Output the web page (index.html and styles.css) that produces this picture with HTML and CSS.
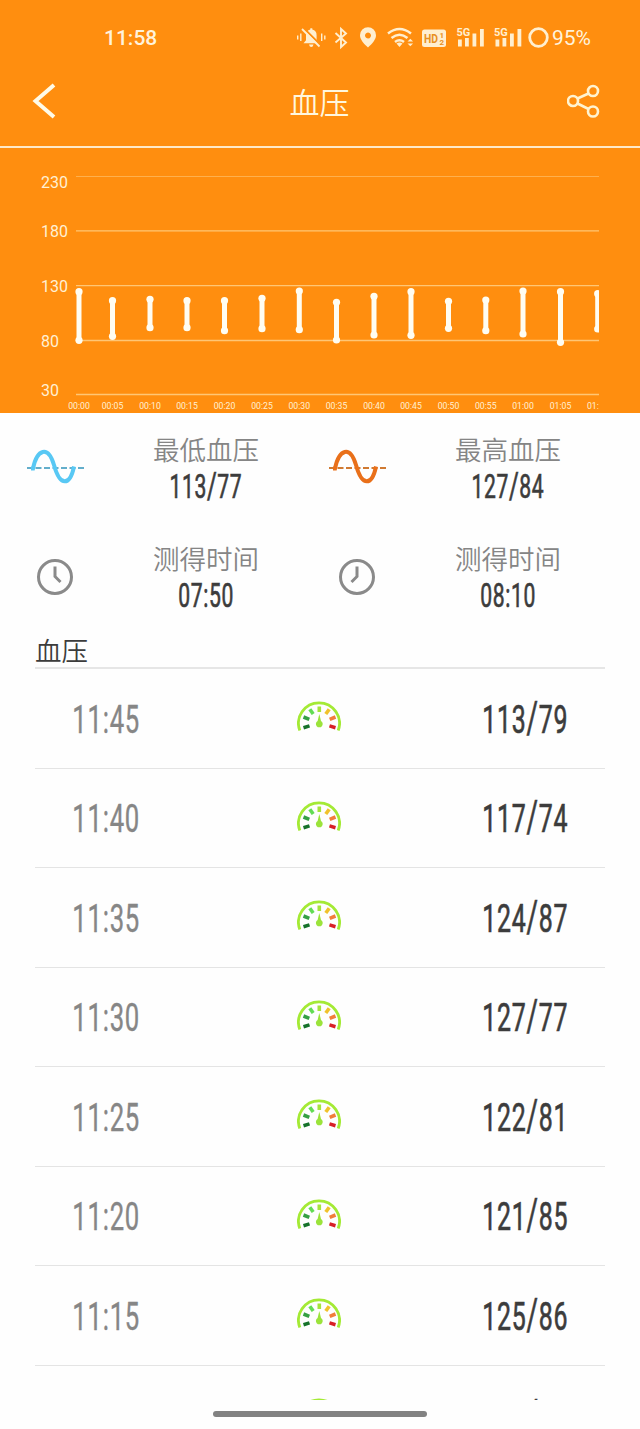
FILE: index.html
```html
<!DOCTYPE html>
<html lang="zh-CN">
<head>
  <meta charset="UTF-8">
  <meta name="viewport" content="width=device-width, initial-scale=1.0">
  <title>血压</title>
  <link rel="stylesheet" href="styles.css">
</head>
<body>
  <!-- Shared gauge icon -->
  <svg class="defs" width="0" height="0">
    <symbol id="gauge" viewBox="0 0 44 34">
      <path d="M2.8 31.500 A20.500 20.500 0 1 1 41.200 31.500" fill="none" stroke="#a4ea35" stroke-width="2.8"/>
      <g fill="none" stroke-width="3.6">
        <path d="M6.500 28.700 L12.500 26.900" stroke="#16722a"/>
        <path d="M6.500 18 L12.300 20.400" stroke="#35a043"/>
        <path d="M12.800 10.200 L16.200 15" stroke="#62dc55"/>
        <path d="M22.300 7.500 V13" stroke="#a5e43b"/>
        <path d="M32.200 10.200 L28.800 15" stroke="#f0c22c"/>
        <path d="M38.500 18 L32.700 20.400" stroke="#f17d3a"/>
        <path d="M38.500 28.700 L32.500 26.900" stroke="#d81f26"/>
      </g>
      <path d="M22.300 15 L24 22 A3.400 3.400 0 1 1 20.600 22 Z" fill="#9be33b"/>
    </symbol>
  </svg>

  <div class="screen">
    <header class="header">
      <div class="status-bar">
        <span class="clock">11:58</span>
        <svg class="status-icons" width="256" height="26" viewBox="296 25 256 26">
          <!-- muted bell -->
          <path d="M303.500 43.300l2.500-3v-5q0-4.700 4.300-5.700v-1.400h2v1.400q4.300 1 4.300 5.700v5l2.500 3zM309 44.500h4.500q-.5 2.500-2.200 2.500t-2.300-2.500z" fill="#ffefd0"/>
          <path d="M303.500 28L321 45.500" stroke="#ff8e0f" stroke-width="2"/>
          <path d="M302 29L319.500 46.500" stroke="#ffefd0" stroke-width="1.800"/>
          <path d="M297.700 35.500v4M300.800 33.500v7.500M321.700 33.500v7.500M324.800 35.500v4" stroke="#ffefd0" stroke-width="1.400"/>
          <path d="M335.500 33l10.500 9.500-5 4.500V29l5 4.500-10.500 9" fill="none" stroke="#ffefd0" stroke-width="1.900"/>
          <path d="M368 27.200a8 8 0 0 1 8 8c0 4.500-4 8.500-8 12.300c-4-3.800-8-7.800-8-12.300a8 8 0 0 1 8-8zm0 5.300a3 3 0 1 0 .01 0z" fill="#ffefd0"/>
          <!-- wifi -->
          <g fill="none" stroke="#ffefd0" stroke-width="2.500">
            <path d="M388 33.500q11.500-9 23 0M391.500 38q8-6.500 16 0M395 42q4.500-3.500 9 0"/>
          </g>
          <path d="M396.500 43.500q3-2 6 0l-3 3.500zM407.500 41.500l2.800-2.800 2.800 2.800zM407.500 43.500l2.800 2.800 2.800-2.800z" fill="#ffefd0"/>
          <rect x="422" y="29.500" width="24" height="17.500" rx="2.500" fill="#ffefd0"/>
          <text class="hd" x="424" y="43" textLength="14" lengthAdjust="spacingAndGlyphs">HD</text>
          <text class="hd-sub" x="439.500" y="37.500">1</text>
          <text class="hd-sub" x="439.500" y="45">2</text>
          <!-- signal, both SIMs -->
          <g id="signal" fill="#ffefd0">
            <text class="net" x="456.500" y="36.300">5G</text>
            <rect x="458" y="39.500" width="3.800" height="7"/>
            <rect x="465" y="38" width="3.800" height="8.500"/>
            <rect x="472.500" y="33.500" width="3.800" height="13"/>
            <rect x="480" y="29" width="3.800" height="17.500"/>
          </g>
          <use href="#signal" x="37.500"/>
          <circle cx="538.500" cy="37.500" r="8.800" fill="none" stroke="#ffefd0" stroke-width="2.800"/>
        </svg>
        <span class="battery">95%</span>
      </div>
      <nav class="nav">
        <svg width="24" height="38" viewBox="0 0 24 38">
          <path d="M22 3L3.500 19l18.500 16" fill="none" stroke="#fffbe8" stroke-width="4"/>
        </svg>
        <h1 class="title">血压</h1>
        <svg width="34" height="34" viewBox="0 0 34 34" fill="none" stroke="#fff3d0" stroke-width="2.600">
          <circle cx="6" cy="17" r="5"/>
          <circle cx="26" cy="7" r="5"/>
          <circle cx="26" cy="27.500" r="5"/>
          <path d="M10.500 14.500L21.500 9.500M10.500 19.500L21.500 25"/>
        </svg>
      </nav>
    </header>

    <svg class="chart" id="chart" width="640" height="265" viewBox="0 148 640 265">
      <clipPath id="plot"><rect x="60" y="148" width="539" height="265"/></clipPath>
    </svg>

    <section class="stats">
      <div class="stat">
        <svg class="stat-icon" width="60" height="40" viewBox="0 0 60 40" fill="none">
          <path d="M1 20H58" stroke="#63aecb" stroke-width="1.900" stroke-dasharray="6 2.500"/>
          <path d="M5 20.500H7C11 1 22-3 28 17C34 39 44 38 48 18.500" stroke="#58c8f4" stroke-width="4"/>
        </svg>
        <div class="stat-text">
          <div class="stat-label">最低血压</div>
          <div class="stat-value"><span class="din">113<i>/</i>77</span></div>
        </div>
      </div>
      <div class="stat">
        <svg class="stat-icon" width="60" height="40" viewBox="0 0 60 40" fill="none">
          <path d="M1 20H58" stroke="#d07a32" stroke-width="1.900" stroke-dasharray="6 2.500"/>
          <path d="M5 20.500H7C11 1 22-3 28 17C34 39 44 38 48 18.500" stroke="#e9701a" stroke-width="4"/>
        </svg>
        <div class="stat-text">
          <div class="stat-label">最高血压</div>
          <div class="stat-value"><span class="din">127<i>/</i>84</span></div>
        </div>
      </div>
      <div class="stat">
        <svg class="stat-icon" width="60" height="40" viewBox="0 0 60 40" fill="none" stroke="#8a8a8a">
          <circle cx="29" cy="20" r="16.500" stroke-width="3"/>
          <path d="M29 9.500V19.500L34.500 25" stroke-width="3"/>
        </svg>
        <div class="stat-text">
          <div class="stat-label">测得时间</div>
          <div class="stat-value"><span class="din">07:50</span></div>
        </div>
      </div>
      <div class="stat">
        <svg class="stat-icon" width="60" height="40" viewBox="0 0 60 40" fill="none" stroke="#8a8a8a">
          <circle cx="29" cy="20" r="16.500" stroke-width="3"/>
          <path d="M29 9.500V19.500L23.500 25" stroke-width="3"/>
        </svg>
        <div class="stat-text">
          <div class="stat-label">测得时间</div>
          <div class="stat-value"><span class="din">08:10</span></div>
        </div>
      </div>
    </section>

    <h2 class="section-title">血压</h2>
    <ul class="records" id="records"></ul>
    <div class="home-bar"></div>
  </div>

  <script>
    const SVG_NS = "http://www.w3.org/2000/svg";
    const chart = document.getElementById("chart");

    function add(parent, tag, attrs, text) {
      const el = document.createElementNS(SVG_NS, tag);
      for (const key in attrs) el.setAttribute(key, attrs[key]);
      if (text) el.textContent = text;
      parent.appendChild(el);
      return el;
    }

    // value, label baseline, grid line
    const axis = [[230, 188, 176.5], [180, 237, 230.9], [130, 292, 285.7], [80, 346.5, 340.5], [30, 395.5, 394.5]];
    axis.forEach(([value, textY, lineY], i) => {
      add(chart, "text", { x: 41, y: textY, class: "axis-label" }, value);
      add(chart, "line", { x1: 76, x2: 599, y1: lineY, y2: lineY, class: i ? "grid" : "grid faint" });
    });

    // time, x, top, bottom
    const bars = [
      ["00:00", 79, 291.7, 340.3], ["00:05", 112.5, 300.7, 336.3], ["00:10", 150, 299.3, 327.7],
      ["00:15", 187, 300.7, 327.7], ["00:20", 224.5, 300.7, 330.7], ["00:25", 262, 298.3, 328.7],
      ["00:30", 299.3, 291, 329.7], ["00:35", 336.5, 302.3, 340], ["00:40", 374, 296.3, 335],
      ["00:45", 411, 291.7, 335.3], ["00:50", 448.5, 301.3, 328.3], ["00:55", 485.8, 300, 330.7],
      ["01:00", 523, 291, 334], ["01:05", 560.5, 291.7, 342.3], ["01:10", 597.7, 293.7, 329]
    ];
    const plot = add(chart, "g", { "clip-path": "url(#plot)" });
    bars.forEach(([time, x, top, bottom]) => {
      add(plot, "line", { x1: x, x2: x, y1: top, y2: bottom, class: "bar" });
      add(plot, "circle", { cx: x, cy: top, r: 3.6, class: "dot" });
      add(plot, "circle", { cx: x, cy: bottom, r: 3.6, class: "dot" });
      add(plot, "text", { x: x, y: 409.3, class: "time-label" }, time);
    });

    const records = [
      ["11:45", 113, 79], ["11:40", 117, 74], ["11:35", 124, 87], ["11:30", 127, 77],
      ["11:25", 122, 81], ["11:20", 121, 85], ["11:15", 125, 86], ["11:10", 121, 78]
    ];
    document.getElementById("records").innerHTML = records.map(([time, high, low]) => `
      <li class="record">
        <span class="record-time"><span class="din">${time}</span></span>
        <svg class="gauge" width="44" height="34"><use href="#gauge"/></svg>
        <span class="record-value"><span class="din">${high}<i>/</i>${low}</span></span>
      </li>`).join("");
  </script>
</body>
</html>
```
FILE: styles.css
```css
* {
  box-sizing: border-box;
}
body {
  margin: 0;
  background: #fefefe;
  font-family: Roboto, "Noto Sans CJK SC", sans-serif;
}
.defs {
  display: block;
}
.screen {
  width: 640px;
  height: 1429px;
  overflow: hidden;
}
.header {
  height: 148px;
  background: #ff8e0f;
  border-bottom: 2px solid #ffe9c8;
}
.status-bar {
  display: flex;
  align-items: center;
  height: 76px;
  padding-left: 104px;
  color: #fff3dc;
}
.clock {
  width: 192px;
  font-size: 21px;
  font-weight: 500;
}
.battery {
  font-size: 21px;
}
.hd {
  font-size: 13px;
  font-weight: 700;
  fill: #e8901f;
}
.hd-sub {
  font-size: 8px;
  font-weight: 700;
  fill: #e8901f;
}
.net {
  font-size: 11px;
  font-weight: 700;
}
.nav {
  display: flex;
  align-items: center;
  justify-content: space-between;
  height: 50px;
  padding: 0 39px 0 32px;
}
.title {
  margin: 6px 0 0 16px;
  color: #fff7de;
  font-size: 30px;
  font-weight: 350;
  line-height: 40px;
}
.chart {
  display: block;
  background: #ff8e0f;
}
.axis-label {
  font-size: 16px;
  fill: #fff0d4;
}
.time-label {
  font-size: 8.7px;
  text-anchor: middle;
  fill: #fff0d4;
}
.grid {
  stroke: #ffc675;
  stroke-width: 1.3;
}
.faint {
  stroke: #ffb04d;
  stroke-width: 1;
}
.bar {
  stroke: #fffdf2;
  stroke-width: 5;
}
.dot {
  fill: #fffdf2;
}
.stats {
  display: grid;
  grid-template-columns: 302px 302px;
  grid-auto-rows: 109px;
  height: 218px;
}
.stat {
  display: flex;
  padding-left: 26px;
}
.stat-icon {
  flex: none;
  margin-top: 35px;
}
.stat-text {
  flex: none;
  width: 240px;
  padding-top: 18px;
  text-align: center;
}
.stat-label {
  color: #858585;
  font-size: 26.5px;
  font-weight: 350;
  line-height: 40px;
}
.stat-value {
  color: #3c3c3c;
  font-size: 33.5px;
  line-height: 32px;
}
/* narrow digits */
.din {
  display: inline-block;
  letter-spacing: 0.03em;
  white-space: nowrap;
  transform: scaleX(0.63);
  -webkit-text-stroke: 0.7px currentColor;
}
.din i {
  font-size: 1.12em;
  font-style: normal;
  line-height: 0;
}
.section-title {
  margin: 0 35px;
  height: 38px;
  border-bottom: 2px solid #e6e6e6;
  color: #3c3c3c;
  font-size: 26.5px;
  font-weight: 350;
  line-height: 41px;
}
.records {
  height: 731px;
  margin: 0 35px;
  padding: 0;
  overflow: hidden;
  list-style: none;
}
.record {
  display: grid;
  grid-template-columns: 142px 1fr 160px;
  align-items: center;
  justify-items: center;
  height: 99.5px;
  border-bottom: 1.5px solid #e4e4e4;
  font-size: 39.5px;
}
/* the list is cut just under the top edge of the last row's digits */
.record-time,
.record-value {
  padding-top: 2px;
}
.record:last-child .record-time,
.record:last-child .record-value {
  padding-top: 6px;
}
.record-time {
  color: #868686;
}
.record-time .din {
  transform: scaleX(0.65);
  -webkit-text-stroke-width: 0.4px;
}
.record-value {
  color: #3c3c3c;
}
.gauge {
  margin: 0 0 4px 16px;
}
.home-bar {
  width: 214px;
  height: 6px;
  margin: 11px auto 0;
  border-radius: 3px;
  background: #828282;
}
```
